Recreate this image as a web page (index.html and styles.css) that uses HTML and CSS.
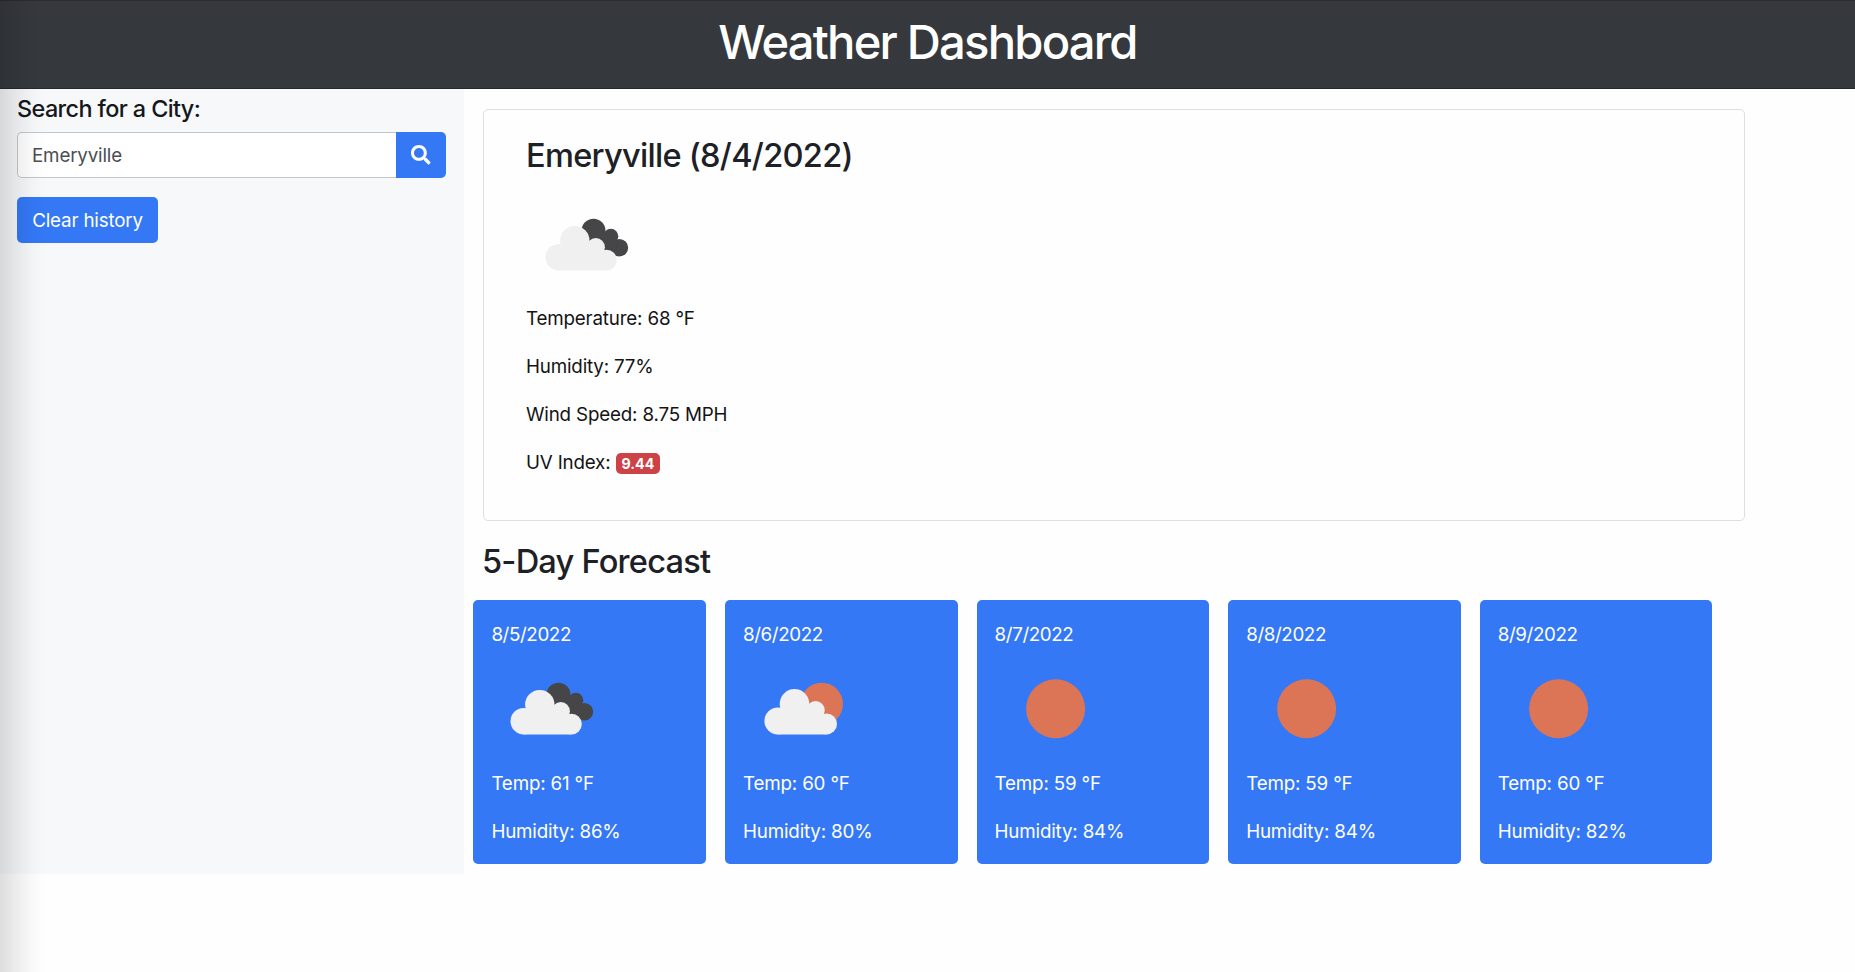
FILE: index.html
```html
<!DOCTYPE html>
<html lang="en">
<head>
<meta charset="utf-8">
<title>Weather Dashboard</title>
<link rel="stylesheet" href="styles.css">
</head>
<body>
<svg class="sprite" aria-hidden="true">
  <symbol id="broken-clouds" viewBox="0 0 120 120">
    <g fill="#464648"><circle cx="67.5" cy="45.7" r="12"/><circle cx="84.8" cy="51.2" r="7.5"/><circle cx="93.4" cy="62.7" r="8.8"/><path d="M60 50L76 43L88 58L92 71.4L80 66L64 56Z"/></g>
    <g fill="#f0f0f0"><circle cx="32.7" cy="72.2" r="13.2"/><circle cx="48.8" cy="55.6" r="14.7"/><circle cx="69.8" cy="62.2" r="9.1"/><circle cx="80.5" cy="75.1" r="10.3"/><path d="M32.7 66L48 56L69.8 60L80.5 75V85.4H32.7Z"/></g>
  </symbol>
  <symbol id="few-clouds" viewBox="0 0 120 120">
    <circle cx="78.7" cy="55" r="21.3" fill="#dc7556"/>
    <g fill="#f0f0f0"><circle cx="34.8" cy="72" r="13.4"/><circle cx="51.5" cy="54.9" r="14.8"/><circle cx="72.6" cy="61.2" r="9.1"/><circle cx="83.5" cy="74.9" r="10.5"/><path d="M34.8 66L50 56L72.6 60L83.5 75V85.4H34.8Z"/></g>
  </symbol>
  <symbol id="clear-sky" viewBox="0 0 120 120"><circle cx="60.6" cy="59.7" r="29.5" fill="#dc7556"/></symbol>
</svg>
<header class="header"><h1 class="header-title">Weather Dashboard</h1></header>
<div class="layout">
  <aside class="sidebar">
    <h2 class="search-label">Search for a City:</h2>
    <div class="search">
      <input class="search-input" type="text" value="Emeryville" aria-label="City">
      <button class="search-button" aria-label="Search"><svg class="search-icon" viewBox="0 0 512 512"><path fill="currentColor" d="M505 442.7L405.3 343c-4.500-4.500-10.600-7-17-7H372c27.600-35.300 44-79.700 44-128C416 93.100 322.900 0 208 0S0 93.100 0 208s93.100 208 208 208c48.300 0 92.700-16.400 128-44v16.300c0 6.400 2.500 12.500 7 17l99.700 99.700c9.400 9.400 24.600 9.400 33.900 0l28.300-28.300c9.400-9.400 9.400-24.600.1-34zM208 336c-70.700 0-128-57.200-128-128 0-70.700 57.200-128 128-128 70.700 0 128 57.200 128 128 0 70.700-57.200 128-128 128z"/></svg></button>
    </div>
    <button class="clear-button">Clear history</button>
  </aside>
  <main class="content">
    <section class="today">
      <h3 class="today-title">Emeryville (8/4/2022)</h3>
      <svg class="weather-icon"><use href="#broken-clouds"/></svg>
      <p class="line">Temperature: 68 °F</p>
      <p class="line">Humidity: 77%</p>
      <p class="line">Wind Speed: 8.75 MPH</p>
      <p class="line">UV Index: <span class="badge">9.44</span></p>
    </section>
    <h3 class="forecast-title">5-Day Forecast</h3>
    <section class="forecast">
      <article class="day"><div class="date">8/5/2022</div><svg class="weather-icon"><use href="#broken-clouds"/></svg><p class="line">Temp: 61 °F</p><p class="line">Humidity: 86%</p></article>
      <article class="day"><div class="date">8/6/2022</div><svg class="weather-icon"><use href="#few-clouds"/></svg><p class="line">Temp: 60 °F</p><p class="line">Humidity: 80%</p></article>
      <article class="day"><div class="date">8/7/2022</div><svg class="weather-icon"><use href="#clear-sky"/></svg><p class="line">Temp: 59 °F</p><p class="line">Humidity: 84%</p></article>
      <article class="day"><div class="date">8/8/2022</div><svg class="weather-icon"><use href="#clear-sky"/></svg><p class="line">Temp: 59 °F</p><p class="line">Humidity: 84%</p></article>
      <article class="day"><div class="date">8/9/2022</div><svg class="weather-icon"><use href="#clear-sky"/></svg><p class="line">Temp: 60 °F</p><p class="line">Humidity: 82%</p></article>
    </section>
  </main>
</div>
<div class="edge-shade"></div>
</body>
</html>
```
FILE: styles.css
```css
* { box-sizing: border-box; }
body {
  margin: 0;
  height: 972px;
  overflow: hidden;
  background: #fefefe;
  color: #1d2024;
  font-family: Inter, "Liberation Sans", sans-serif;
  font-size: 18.8px;
  line-height: 28.8px;
  letter-spacing: -0.18px;
}
h1, h2, h3, p { margin: 0; font-weight: 530; }
.sprite { display: none; }
.header {
  height: 89px;
  padding-top: 12px;
  background: #35393e;
  border-top: 1px solid #2d2b2b;
  border-bottom: 1px solid #25282c;
  color: #fff;
  text-align: center;
}
.header-title { font-size: 47.2px; line-height: 58px; letter-spacing: -1.8px; }
.layout { display: flex; }
.sidebar {
  width: 464px;
  height: 784.5px;
  padding: 5px 18px 0 17px;
  background: #f7f8fa;
}
.search-label { font-size: 23.4px; line-height: 30px; letter-spacing: -0.6px; margin-bottom: 8px; color: #15171a; }
.search { display: flex; height: 46px; margin-bottom: 19px; }
.search-input {
  flex: 1;
  min-width: 0;
  padding: 2px 14px 0;
  border: 1px solid #c3c6ca;
  border-right: 0;
  border-radius: 5px 0 0 5px;
  background: #fff;
  color: #4a4e54;
  font: inherit;
  letter-spacing: inherit;
}
.search-button {
  display: flex;
  align-items: center;
  justify-content: center;
  width: 50.5px;
  padding: 0;
  border: 0;
  border-radius: 0 5px 5px 0;
  background: #3478f6;
  color: #fff;
}
.search-icon { width: 19.5px; height: 19.5px; }
.clear-button {
  display: block;
  width: 141px;
  height: 46px;
  padding: 2px 0 0;
  border: 0;
  border-radius: 5px;
  background: #3478f6;
  color: #fff;
  font: inherit;
  letter-spacing: inherit;
}
.content { flex: 1; padding: 19.5px 110px 0 9.4px; }
.today {
  height: 412.5px;
  margin-left: 9.6px;
  padding: 25px 42px 0;
  border: 1.2px solid #dfdfdf;
  border-radius: 5px;
}
.today-title, .forecast-title { font-size: 32.6px; line-height: 40px; letter-spacing: -0.72px; }
.today-title { margin-bottom: 10.500px; }
.forecast-title { margin: 20px 0 18.5px 8.600px; letter-spacing: -0.78px; }
.weather-icon { display: block; width: 120px; height: 120px; }
.line { margin-bottom: 19.2px; font-weight: 400; }
.today .line { color: #141414; }
.badge {
  display: inline-block;
  padding: 4px 6px 3px;
  border-radius: 5px;
  background: #cc4247;
  color: #fff;
  font-size: 14.2px;
  font-weight: 700;
  line-height: 14.4px;
  letter-spacing: 0;
}
.forecast { display: flex; gap: 19px; }
.day {
  width: 232.6px;
  height: 264.4px;
  padding: 20.4px 18px 0;
  border-radius: 5px;
  background: #3478f6;
  color: #fff;
}
.date { height: 29px; padding-top: 1.2px; letter-spacing: -0.4px; }
.day .weather-icon + .line { padding-top: 1.2px; }
.edge-shade {
  position: absolute;
  inset: 0 auto 0 0;
  width: 46px;
  background: linear-gradient(to right, rgba(0,0,0,.13), rgba(0,0,0,.07) 35%, rgba(0,0,0,.02) 70%, transparent);
  pointer-events: none;
}
```
